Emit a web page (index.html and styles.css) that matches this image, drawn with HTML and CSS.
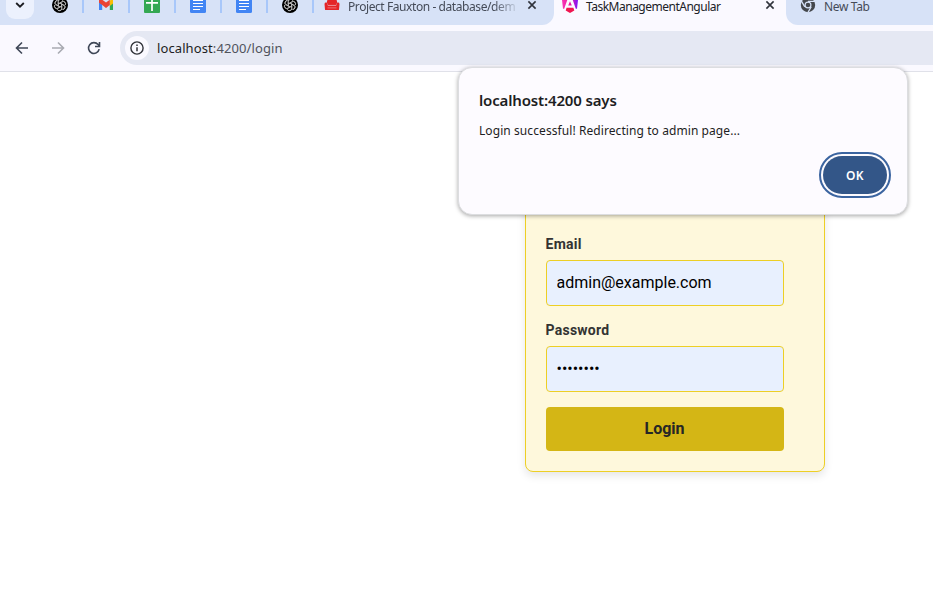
FILE: index.html
```html
<!DOCTYPE html>
<html lang="en">
<head>
<meta charset="utf-8">
<title>TaskManagementAngular</title>
<link rel="stylesheet" href="styles.css">
</head>
<body>
<svg class="defs" aria-hidden="true">
  <symbol id="knot" viewBox="0 0 16 16">
    <circle cx="8" cy="8" r="8" fill="#000"/>
    <g fill="none" stroke="#c4c4c4" stroke-width=".75">
      <path id="petal" d="M6.300 9V4.600a2.300 2.300 0 0 1 4.400-.9M6.300 6.900l3.800-2.200a2.300 2.300 0 0 1 3.100 3.200"/>
      <use href="#petal" transform="rotate(60 8 8)"/><use href="#petal" transform="rotate(120 8 8)"/>
      <use href="#petal" transform="rotate(180 8 8)"/><use href="#petal" transform="rotate(240 8 8)"/>
      <use href="#petal" transform="rotate(300 8 8)"/>
    </g>
  </symbol>
  <symbol id="doc" viewBox="0 0 16 16">
    <rect width="16" height="16" rx="1.5" fill="#4285f4"/>
    <path d="M3 3.500h10M3 6.500h10M3 9.500h10M3 12.500h7" stroke="#fff" stroke-width="1.1"/>
  </symbol>
  <symbol id="cross" viewBox="0 0 10 10">
    <path d="M1.4 1.4l7.2 7.2M8.6 1.4L1.4 8.6" stroke="currentColor" stroke-width="1.6"/>
  </symbol>
</svg>
<header class="tabstrip">
  <div class="search"><svg width="10" height="6" viewBox="0 0 10 6"><path d="M1.2 1l3.8 3.7L8.800 1" fill="none" stroke="#1c1d22" stroke-width="1.8"/></svg></div>
  <div class="pinned"><svg class="fav"><use href="#knot"/></svg></div>
  <div class="pinned"><svg class="fav" viewBox="0 0 16 16"><path d="M1 3v10h3.200V6z" fill="#4285f4"/><path d="M11.800 6v7H15V3z" fill="#34a853"/><path d="M11.800 3.500L15 2v4.500l-3.200 2.500z" fill="#fbbc04"/><path d="M1 3.500C1 1.500 3 1.500 4.200 2.700L8 5.600l3.800-2.900V8L8 11 4.200 8 1 5.800z" fill="#ea4335"/></svg></div>
  <div class="pinned"><svg class="fav" viewBox="0 0 16 16"><rect width="16" height="16" rx="1" fill="#34a853"/><path d="M2 5.800h12M8 0v14" stroke="#fff" stroke-width="1.700"/></svg></div>
  <div class="pinned"><svg class="fav"><use href="#doc"/></svg></div>
  <div class="pinned"><svg class="fav"><use href="#doc"/></svg></div>
  <div class="pinned"><svg class="fav"><use href="#knot"/></svg></div>
  <div class="tab first">
    <svg class="fav" viewBox="0 0 16 16"><path d="M3.600 2h8.800l.8 3.400L12 8H4L2.800 5.400z" fill="#e42528"/><path d="M.5 7Q.8 5.200 2.400 5.600 3.800 6 3.800 8.500h8.400q0-2.500 1.400-2.900Q15.200 5.200 15.500 7L15 12.600q-.1.500-.6.500H1.600q-.5 0-.6-.5z" fill="#e42528"/><path d="M4 8.400h8M3.500 10.900h9" stroke="#f58d90" stroke-width=".7"/></svg>
    <span class="title fade">Project Fauxton - database/dem</span>
    <svg class="close"><use href="#cross"/></svg>
  </div>
  <div class="tab active">
    <svg class="fav" viewBox="0 0 16 16"><defs><linearGradient id="ng"><stop offset="0" stop-color="#f637b6"/><stop offset=".5" stop-color="#f0169a"/><stop offset="1" stop-color="#7a15ff"/></linearGradient></defs><path d="M6.300 0L0 3l1 8.800h1.200zM9.700 0L16 3l-1 8.800h-1.200zM8 4.200L6.200 8.500h3.600z" fill="url(#ng)"/><path d="M4.600 10.800h6.800l.9 2.600L8 16l-4.300-2.600z" fill="#f01650"/></svg>
    <span class="title">TaskManagementAngular</span>
    <svg class="close"><use href="#cross"/></svg>
  </div>
  <div class="tab last">
    <svg class="fav" viewBox="0 0 16 16"><circle cx="8" cy="8" r="7.200" fill="#44474c"/><g stroke="#d7e2f7" stroke-width="1.300"><path d="M8 4.300h7M4.800 9.800L1.300 3.800M11.200 9.800L7.700 15.900"/></g><circle cx="8" cy="8" r="3.500" fill="#d7e2f7"/><circle cx="8" cy="8" r="2.300" fill="#44474c"/></svg>
    <span class="title new">New Tab</span>
  </div>
</header>
<nav class="toolbar">
  <svg class="nav" viewBox="0 0 16 16"><path d="M14 8H2.800M8 2.500L2.500 8 8 13.500"/></svg>
  <svg class="nav off" viewBox="0 0 16 16"><path d="M2 8h11.200M8 2.500L13.500 8 8 13.500"/></svg>
  <svg class="nav" viewBox="0 0 16 16"><path d="M13.200 9.200A5.400 5.400 0 1 1 12.100 4.600L13.300 6M13.500 2v4.500H9"/></svg>
  <div class="omnibox">
    <span class="info"><svg width="14" height="14" viewBox="0 0 14 14"><circle cx="7" cy="7" r="6.100" fill="none" stroke="#303239" stroke-width="1.400"/><path d="M7 6.200v4M7 3.600v1.500" stroke="#303239" stroke-width="1.500"/></svg></span>
    <span class="url"><b>localhost</b>:4200/login</span>
  </div>
</nav>
<main class="page">
  <form class="card">
    <label for="email">Email</label>
    <input id="email" type="text" value="admin@example.com">
    <label for="password">Password</label>
    <input id="password" type="password" value="password">
    <button class="login" type="button">Login</button>
  </form>
</main>
<section class="dialog" role="alertdialog">
  <h1>localhost:4200 says</h1>
  <p>Login successful! Redirecting to admin page...</p>
  <button class="ok" type="button">OK</button>
</section>
</body>
</html>
```
FILE: styles.css
```css
* { box-sizing: border-box; }
body { margin: 0; height: 616px; overflow: hidden; background: #fff; font-family: "Noto Sans", "Open Sans", sans-serif; position: relative; }
svg { display: block; flex: none; }
.defs { position: absolute; width: 0; height: 0; }
.tabstrip { display: flex; height: 25px; background: #faf9ff; }
.search { width: 38px; background: #d7e2f7; padding-left: 6px; flex: none; }
.search svg { box-sizing: content-box; padding: 2px 9px 11px; background: #ecf1fd; border-radius: 0 0 9px 9px; }
.pinned { width: 46px; flex: none; background: linear-gradient(#a8c7fa, #a8c7fa) right top / 2px 13px no-repeat #d7e2f7; padding-left: 14px; }
.fav { width: 16px; height: 16px; margin-top: -3px; }
.tab { display: flex; flex: none; font-size: 12px; color: #454b58; }
.first { width: 240px; padding-left: 10px; background: #d7e2f7; border-radius: 0 0 12px 0; }
.active { width: 232px; padding-left: 8px; color: #202127; }
.last { flex: 1; padding-left: 14px; background: #d7e2f7; border-radius: 0 0 0 12px; }
.title { margin-left: 8px; line-height: 13px; white-space: nowrap; letter-spacing: -.5px; }
.fade { width: 168px; letter-spacing: -.42px; -webkit-mask-image: linear-gradient(90deg, #000 145px, transparent 172px); mask-image: linear-gradient(90deg, #000 145px, transparent 172px); }
.new { letter-spacing: -.35px; }
.close { width: 10px; height: 10px; color: #30343c; }
.first .close { margin-left: 11px; }
.active .close { margin-left: auto; margin-right: 11px; }
.toolbar { display: flex; align-items: center; height: 47px; padding: 0 0 1px 14px; gap: 20px; background: #faf9ff; border-bottom: 1px solid #e0e1e9; }
.nav { width: 16px; height: 16px; fill: none; stroke: #3f4757; stroke-width: 1.6; }
.off { stroke: #a9abb2; }
.omnibox { display: flex; align-items: center; flex: 1; height: 34px; margin-left: -2px; padding-left: 5px; background: #e5e8f3; border-radius: 17px 0 0 17px; }
.info { display: grid; place-items: center; width: 24px; height: 24px; border-radius: 50%; background: #faf9ff; }
.url { margin-left: 8px; font-size: 13px; letter-spacing: .1px; color: #50535c; white-space: nowrap; }
.url b { font-weight: 400; color: #1d1e23; }
.page { display: flex; padding: 72px 0 0 525px; }
.card { display: flex; flex-direction: column; width: 300px; height: 328px; padding: 90px 20px 20px; border: 1px solid #edcf25; border-radius: 0 0 8px 8px; background: #fef8dc; box-shadow: 0 4px 8px rgba(0,0,0,.1); border-radius: 8px; font-family: Roboto, sans-serif; }
.card > * { flex: none; }
.card label { font-size: 14px; line-height: 18px; font-weight: 700; letter-spacing: .25px; color: #333; margin-bottom: 7px; margin-left: -.5px; }
.card input { width: 238px; height: 46px; margin: 0 0 15px; padding: 0 10px 1px 9.500px; border: 1px solid #edcf25; border-radius: 4px; background: #e8f0fe; color: #000; font: 16px Roboto, sans-serif; }
.login { width: 238px; height: 44px; padding: 0 1px 1px 0; border: 0; border-radius: 4px; background: #d4b615; color: #262626; font: 700 16px Roboto, sans-serif; }
.dialog { position: absolute; left: 458px; top: 67px; width: 450px; height: 148px; padding: 20px 20px 20px; border: 1px solid #dcdde0; border-radius: 14px; background: #fdfbff; box-shadow: 0 1px 4px rgba(0,0,0,.35); display: flex; flex-direction: column; color: #1d1e23; }
.dialog h1 { margin: 0; font-size: 15px; line-height: 24px; font-weight: 600; letter-spacing: -.15px; }
.dialog p { margin: 9px 0 0; font-size: 12px; line-height: 20px; letter-spacing: .08px; }
.ok { width: 64px; height: 38px; margin: 15px 0 0 auto; border: 0; border-radius: 19px; background: #335688; color: #fff; font: 600 12px "Noto Sans", sans-serif; letter-spacing: .3px; outline: 2px solid #3b64a0; outline-offset: 2px; }
```
